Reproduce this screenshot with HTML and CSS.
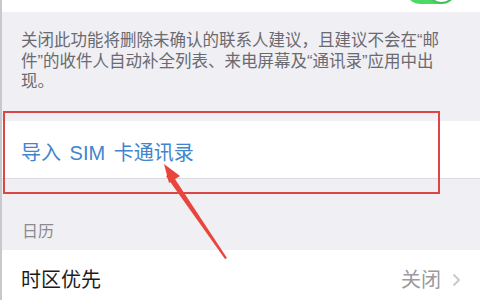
FILE: index.html
```
<!DOCTYPE html>
<html lang="zh-CN">
<head>
  <meta charset="UTF-8">
  <title>通讯录设置</title>
  <link rel="stylesheet" href="styles.css">
</head>
<body>

  <div class="screen">
    <div class="row top-row">
      <span class="switch on"><span class="knob"></span></span>
    </div>

    <p class="note">关闭此功能将删除未确认的联系人建议，且建议不会在“邮件”的收件人自动补全列表、来电屏幕及“通讯录”应用中出现。</p>

    <div class="row action-row">
      <span class="action">导入 SIM 卡通讯录</span>
    </div>

    <div class="section-head">日历</div>

    <div class="row">
      <span class="label">时区优先</span>
      <span class="value">关闭</span>
      <span class="chevron">
        <svg width="9" height="14" viewBox="0 0 9 14"><path d="M1.5 1.5 L7 7 L1.5 12.5" fill="none" stroke="#c7c7cc" stroke-width="1.8"/></svg>
      </span>
    </div>

    <!-- annotation on top of the screenshot -->
    <div class="highlight"></div>
    <svg class="arrow" width="480" height="300" viewBox="0 0 480 300">
      <polygon points="166,176 171,173 227,258 225,259" fill="#e8453c"/>
      <polygon points="164,164 180,176 169,183" fill="#e8453c"/>
    </svg>
  </div>

</body>
</html>
```

FILE: styles.css
```
body {
  margin: 0;
  font-family: "Liberation Sans", "Noto Sans CJK SC", sans-serif;
  background: #efeff4;
}
.screen {
  position: relative;
  width: 478px;
  height: 300px;
  overflow: hidden;
  border-left: 2px solid #c9c9cc;
  background: #efeff4;
}
.row {
  display: flex;
  align-items: center;
  background: #fff;
  padding: 18px 18px 18px 19px;
}
.top-row {
  height: 12px;
  padding: 0;
  overflow: hidden;
  justify-content: flex-end;
  align-items: flex-end;
}
.switch {
  position: relative;
  width: 52px;
  height: 31px;
  border-radius: 16px;
  margin: 0 23px 8px 0;
  flex-shrink: 0;
}
.switch.on {
  background: #4cd964;
}
.switch .knob {
  position: absolute;
  right: 2px;
  top: 2px;
  width: 27px;
  height: 27px;
  border-radius: 50%;
  background: #fff;
  box-shadow: 0 1px 3px rgba(0, 0, 0, 0.25);
}
.note {
  margin: 0;
  padding: 18px 31px 29px 19px;
  font-size: 16.5px;
  line-height: 20.5px;
  color: #6a6a70;
}
.action-row {
  height: 24px;
  padding: 20px 18px 13px 19px;
  border-bottom: 1px solid #dcdce0;
}
.action {
  font-size: 20px;
  line-height: 24px;
  word-spacing: 3px;
  color: #3f86cc;
}
.section-head {
  padding: 43px 19px 8px 20px;
  font-size: 16px;
  line-height: 20px;
  color: #8a8a8f;
}
.label {
  flex: 1;
  font-size: 20px;
  line-height: 24px;
  color: #1c1c1c;
}
.value {
  font-size: 20px;
  line-height: 24px;
  color: #9a9aa0;
  margin-right: 11px;
}
.chevron {
  display: flex;
  margin-right: 1px;
}
.highlight {
  position: absolute;
  left: 1px;
  top: 111px;
  width: 433px;
  height: 79px;
  border: 2.5px solid #dd4646;
}
.arrow {
  position: absolute;
  left: -2px;
  top: 0;
}
```
